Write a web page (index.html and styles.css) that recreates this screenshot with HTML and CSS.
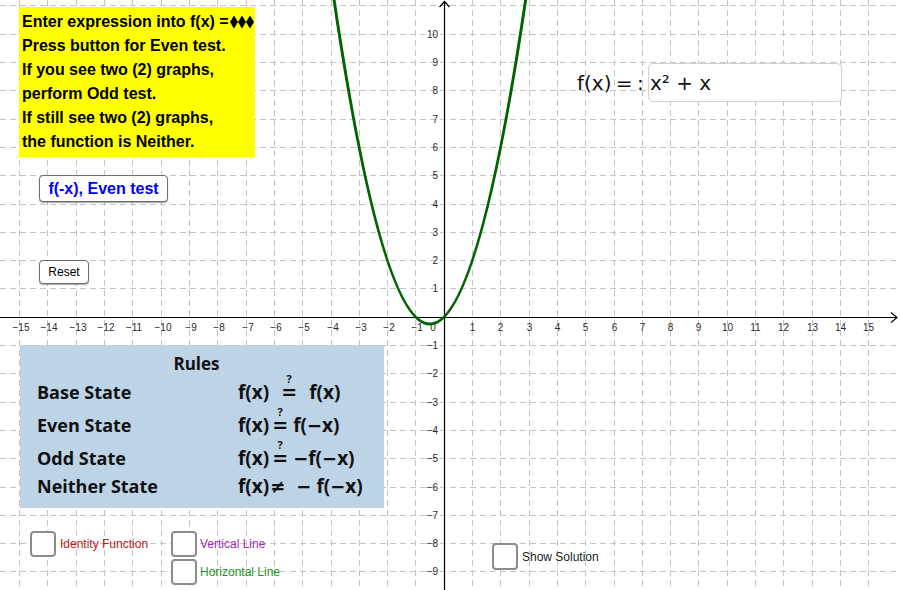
FILE: index.html
```html
<!DOCTYPE html>
<html lang="en">
<head>
<meta charset="utf-8">
<title>Even / Odd function test</title>
<link rel="stylesheet" href="styles.css">
</head>
<body>
<div class="app">
  <svg class="graph" width="900" height="590" viewBox="0 0 900 590" xmlns="http://www.w3.org/2000/svg">
    <path class="grid" d="M19.5 0V590M47.5 0V590M76.5 0V590M104.5 0V590M132.5 0V590M161.5 0V590M189.5 0V590M217.5 0V590M246.5 0V590M274.5 0V590M302.5 0V590M331.5 0V590M359.5 0V590M387.5 0V590M415.5 0V590M472.5 0V590M500.5 0V590M529.5 0V590M557.5 0V590M585.5 0V590M614.5 0V590M642.5 0V590M670.5 0V590M698.5 0V590M727.5 0V590M755.5 0V590M783.5 0V590M812.5 0V590M840.5 0V590M868.5 0V590"/>
    <path class="grid" d="M0 5.5H900M0 34.5H900M0 62.5H900M0 90.5H900M0 119.5H900M0 147.5H900M0 175.5H900M0 204.5H900M0 232.5H900M0 260.5H900M0 288.5H900M0 345.5H900M0 373.5H900M0 402.5H900M0 430.5H900M0 458.5H900M0 487.5H900M0 515.5H900M0 543.5H900M0 571.5H900"/>
    <path class="axis" d="M0 317.5H897M891 312.5L897 317.5L891 322.5"/>
    <path class="axis" d="M444.5 590V1.5M439.5 7L444.5 1.5L449.5 7"/>
    <g class="xlabels">
      <text x="21" y="331">−15</text>
      <text x="49" y="331">−14</text>
      <text x="78" y="331">−13</text>
      <text x="106" y="331">−12</text>
      <text x="134" y="331">−11</text>
      <text x="163" y="331">−10</text>
      <text x="191" y="331">−9</text>
      <text x="219" y="331">−8</text>
      <text x="248" y="331">−7</text>
      <text x="276" y="331">−6</text>
      <text x="304" y="331">−5</text>
      <text x="333" y="331">−4</text>
      <text x="361" y="331">−3</text>
      <text x="389" y="331">−2</text>
      <text x="417" y="331">−1</text>
      <text x="433" y="331">0</text>
      <text x="472.5" y="331">1</text>
      <text x="500.5" y="331">2</text>
      <text x="529.5" y="331">3</text>
      <text x="557.5" y="331">4</text>
      <text x="585.5" y="331">5</text>
      <text x="614.5" y="331">6</text>
      <text x="642.5" y="331">7</text>
      <text x="670.5" y="331">8</text>
      <text x="698.5" y="331">9</text>
      <text x="727.5" y="331">10</text>
      <text x="755.5" y="331">11</text>
      <text x="783.5" y="331">12</text>
      <text x="812.5" y="331">13</text>
      <text x="840.5" y="331">14</text>
      <text x="868.5" y="331">15</text>
    </g>
    <g class="ylabels">
      <text x="438" y="38">10</text>
      <text x="438" y="66">9</text>
      <text x="438" y="94">8</text>
      <text x="438" y="123">7</text>
      <text x="438" y="151">6</text>
      <text x="438" y="179">5</text>
      <text x="438" y="208">4</text>
      <text x="438" y="236">3</text>
      <text x="438" y="264">2</text>
      <text x="438" y="292">1</text>
      <text x="438" y="349">−1</text>
      <text x="438" y="377">−2</text>
      <text x="438" y="406">−3</text>
      <text x="438" y="434">−4</text>
      <text x="438" y="462">−5</text>
      <text x="438" y="491">−6</text>
      <text x="438" y="519">−7</text>
      <text x="438" y="547">−8</text>
      <text x="438" y="575">−9</text>
    </g>
    <path class="curve" d="M325.14 -63.35Q429.85 711.5 534.56 -63.35"/>
  </svg>

  <div class="note">
    <div>Enter expression into f(x) =<svg class="diamonds" width="24" height="14" viewBox="0 0 24 14" aria-hidden="true"><polygon points="4,0.5 8,7 4,13.5 0,7"/><polygon points="12,0.5 16,7 12,13.5 8,7"/><polygon points="20,0.5 24,7 20,13.5 16,7"/></svg></div>
    <div>Press button for Even test.</div>
    <div>If you see two (2) graphs,</div>
    <div>perform Odd test.</div>
    <div>If still see two (2) graphs,</div>
    <div>the function is Neither.</div>
  </div>

  <button class="btn btn-even">f(-x), Even test</button>
  <button class="btn btn-reset">Reset</button>

  <div class="inputbox">
    <span class="input-label">f(x) = :</span>
    <div class="field">x² + x</div>
  </div>

  <div class="rules">
    <div class="rules-title">Rules</div>
    <div class="rule r1"><span class="rname">Base State</span><span class="formula">f(x)<span class="qeq wide"><span class="q">?</span><span class="eq">=</span></span>f(x)</span></div>
    <div class="rule r2"><span class="rname">Even State</span><span class="formula">f(x)<span class="qeq"><span class="q">?</span><span class="eq">=</span></span>f(<span class="m">−</span>x)</span></div>
    <div class="rule r3"><span class="rname">Odd State</span><span class="formula">f(x)<span class="qeq"><span class="q">?</span><span class="eq">=</span></span><span class="m">−</span>f(<span class="m">−</span>x)</span></div>
    <div class="rule r4"><span class="rname">Neither State</span><span class="formula">f(x)<span class="neq">≠</span><span class="m minus">−</span>f(<span class="m">−</span>x)</span></div>
  </div>

  <label class="cb cb-identity"><span class="box"></span><span class="cb-text">Identity Function</span></label>
  <label class="cb cb-vertical"><span class="box"></span><span class="cb-text">Vertical Line</span></label>
  <label class="cb cb-horizontal"><span class="box"></span><span class="cb-text">Horizontal Line</span></label>
  <label class="cb cb-solution"><span class="box"></span><span class="cb-text">Show Solution</span></label>
</div>
</body>
</html>
```

FILE: styles.css
```css
html, body {
  margin: 0;
  padding: 0;
  background: #ffffff;
}

.app {
  position: relative;
  width: 900px;
  height: 590px;
  overflow: hidden;
  background: #ffffff;
  font-family: "Liberation Sans", Arial, sans-serif;
}

.graph {
  position: absolute;
  left: 0;
  top: 0;
  display: block;
}

.grid {
  fill: none;
  stroke: #c4c4c4;
  stroke-width: 1;
  stroke-dasharray: 6 4;
}

.axis {
  fill: none;
  stroke: #000000;
  stroke-width: 1.2;
}

.xlabels text,
.ylabels text {
  font-family: "Liberation Sans", Arial, sans-serif;
  font-size: 10px;
  fill: #2a2a2a;
}

.xlabels text {
  text-anchor: middle;
}

.ylabels text {
  text-anchor: end;
}

.curve {
  fill: none;
  stroke: #006400;
  stroke-width: 3;
  stroke-linecap: round;
}

/* Yellow instruction text box */
.note {
  position: absolute;
  left: 19px;
  top: 7px;
  width: 236px;
  height: 150px;
  box-sizing: border-box;
  padding: 3px 0 0 3px;
  background: #ffff00;
  color: #000000;
  font-weight: bold;
  font-size: 16px;
  line-height: 24px;
  white-space: nowrap;
}

.diamonds {
  display: inline-block;
  vertical-align: -2px;
  margin-left: 1px;
  fill: #000000;
}

/* Buttons */
.btn {
  position: absolute;
  box-sizing: border-box;
  margin: 0;
  padding: 0;
  background: #ffffff;
  border: 1px solid #6e6e6e;
  border-radius: 4px;
  box-shadow: 0 1px 1px rgba(0, 0, 0, 0.35);
  font-family: "Liberation Sans", Arial, sans-serif;
  text-align: center;
  cursor: pointer;
}

.btn-even {
  left: 39px;
  top: 175px;
  width: 129px;
  height: 27px;
  color: #0000ff;
  font-weight: bold;
  font-size: 16px;
}

.btn-reset {
  left: 39px;
  top: 260px;
  width: 50px;
  height: 24px;
  color: #000000;
  font-size: 12px;
}

/* Input box */
.inputbox {
  position: absolute;
  left: 577px;
  top: 63px;
  height: 39px;
  display: flex;
  align-items: center;
}

.input-label {
  flex: 0 0 71px;
  font-family: "DejaVu Sans", sans-serif;
  font-size: 20px;
  word-spacing: -2px;
  color: #111111;
  white-space: nowrap;
}

.field {
  box-sizing: border-box;
  width: 194px;
  height: 39px;
  border: 1px solid #d2d2d2;
  border-radius: 5px;
  background: #ffffff;
  padding-left: 1px;
  display: flex;
  align-items: center;
  font-family: "DejaVu Sans", sans-serif;
  font-size: 20px;
  color: #111111;
}

/* Rules box */
.rules {
  position: absolute;
  left: 20px;
  top: 345px;
  width: 364px;
  height: 163px;
  box-sizing: border-box;
  padding: 6px 0 0 17px;
  background: #bdd3e6;
  color: #111111;
  font-family: "Open Sans", sans-serif;
  font-weight: 700;
  font-size: 18px;
}

.rules-title {
  height: 26px;
  line-height: 26px;
  text-align: center;
  padding-right: 28px;
  font-size: 17px;
}

.rule {
  display: flex;
  align-items: center;
  white-space: nowrap;
}

.r1 { height: 30px; }
.r2 { height: 36px; }
.r3 { height: 30px; }
.r4 { height: 26px; }

.rname {
  flex: 0 0 201px;
}

.formula {
  display: block;
  white-space: nowrap;
  line-height: 24px;
  font-size: 19px;
}

.m {
  font-family: "DejaVu Sans", sans-serif;
  font-weight: bold;
  font-size: 18px;
}

.qeq {
  display: inline-block;
  text-align: center;
  margin: -8px 5px 0 3px;
}

.qeq.wide {
  margin: -8px 12px 0 12px;
}

.q {
  display: block;
  font-size: 11px;
  line-height: 8px;
  height: 8px;
}

.eq {
  display: block;
  font-family: "DejaVu Sans", sans-serif;
  font-weight: bold;
  font-size: 19px;
  line-height: 18px;
}

.neq {
  font-family: "DejaVu Sans", sans-serif;
  font-weight: bold;
  font-size: 18px;
  margin: 0 11px 0 1px;
}

.minus {
  margin-right: 5px;
}

/* Checkboxes */
.cb {
  position: absolute;
  display: flex;
  align-items: center;
  gap: 4px;
  font-family: "Liberation Sans", Arial, sans-serif;
  font-size: 12px;
  white-space: nowrap;
  cursor: pointer;
}

.box {
  box-sizing: border-box;
  width: 26px;
  height: 26px;
  border: 2px solid #8c8c8c;
  border-radius: 4px;
  background: #ffffff;
}

.cb-identity {
  left: 30px;
  top: 531px;
  color: #b22222;
}

.cb-vertical {
  left: 171px;
  top: 531px;
  gap: 3px;
  color: #a028b4;
}

.cb-horizontal {
  left: 171px;
  top: 559px;
  gap: 3px;
  color: #1e961e;
}

.cb-solution {
  left: 492px;
  top: 543px;
  color: #222222;
}

.cb-solution .box {
  height: 27px;
}
```
